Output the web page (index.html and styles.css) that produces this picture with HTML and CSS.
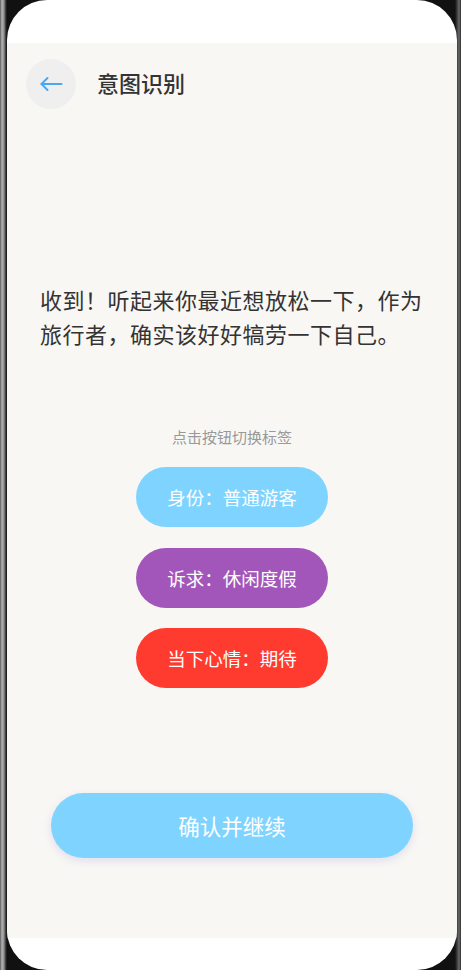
FILE: index.html
```html
<!DOCTYPE html>
<html lang="zh-CN">
<head>
    <meta charset="UTF-8">
    <meta name="viewport" content="width=device-width, initial-scale=1.0">
    <title>意图识别</title>
    <link rel="stylesheet" href="styles.css">
</head>
<body>

    <div class="device">
        <div class="screen">
            <div class="status-bar"></div>

            <div class="page">
                <div class="header">
                    <button class="back-btn" type="button" aria-label="返回">
                        <svg width="24" height="24" viewBox="0 0 24 24" fill="none" stroke="#4aa8f2" stroke-width="2" stroke-linecap="round" stroke-linejoin="round">
                            <path d="M22.5 12H2.5"/>
                            <path d="M8.5 6L2.5 12L8.5 18"/>
                        </svg>
                    </button>
                    <h1 class="title">意图识别</h1>
                </div>

                <p class="message">收到！听起来你最近想放松一下，作为旅行者，确实该好好犒劳一下自己。</p>

                <p class="hint">点击按钮切换标签</p>

                <div class="tags">
                    <button class="tag tag-blue" type="button">身份：普通游客</button>
                    <button class="tag tag-purple" type="button">诉求：休闲度假</button>
                    <button class="tag tag-red" type="button">当下心情：期待</button>
                </div>

                <button class="confirm" type="button">确认并继续</button>
            </div>

            <div class="home-bar"></div>
        </div>
    </div>

</body>
</html>
```

FILE: styles.css
```css
html, body { margin: 0; padding: 0; }
body { font-family: "Noto Sans CJK SC", "Noto Sans", sans-serif; background: #1b1b1d; color: #333; }

.device { width: 461px; height: 970px; box-sizing: border-box; padding: 0 4px 0 7px; background: linear-gradient(to right, #5a5a5a 0, #b5b5b5 2px, #8c8c8c 4px, #2a2a2a 6px, #111 7px, #111 455px, #3a3a3a 457px, #6a6a6a 459px, #2e2e2e 461px); overflow: hidden; }
.screen { height: 970px; background: #fff; border-radius: 40px; overflow: hidden; display: flex; flex-direction: column; }

.status-bar { height: 43px; flex: none; }
.home-bar { flex: 1; }

.page { height: 895px; flex: none; background: #f8f7f4; display: flex; flex-direction: column; }

.header { display: flex; align-items: center; gap: 21px; padding: 16px 19px 0; }
.back-btn { width: 50px; height: 50px; border-radius: 50%; border: none; background: #efeff0; padding: 0; display: flex; align-items: center; justify-content: center; cursor: pointer; }
.title { margin: 0 0 4px; font-size: 22px; font-weight: 500; color: #333; line-height: 30px; }

.message { margin: 173px 33px 0; font-size: 22px; line-height: 34px; letter-spacing: 0.5px; color: #333; }

.hint { margin: 77px 0 0; text-align: center; font-size: 15px; line-height: 20px; color: #999; }

.tags { display: flex; flex-direction: column; align-items: center; gap: 20.5px; margin-top: 20px; }
.tag { width: 192px; height: 60px; border: none; border-radius: 30px; color: #fff; font-family: inherit; font-size: 18.5px; cursor: pointer; }
.tag-blue { background: #7fd4ff; }
.tag-purple { background: #a356b9; }
.tag-red { background: #ff3a2f; }

.confirm { margin: 105px 44px 0; height: 65px; border: none; border-radius: 33px; background: #7fd4ff; color: #fff; font-family: inherit; font-size: 21.5px; box-shadow: 0 3px 8px rgba(120, 110, 210, 0.18); cursor: pointer; }
```
